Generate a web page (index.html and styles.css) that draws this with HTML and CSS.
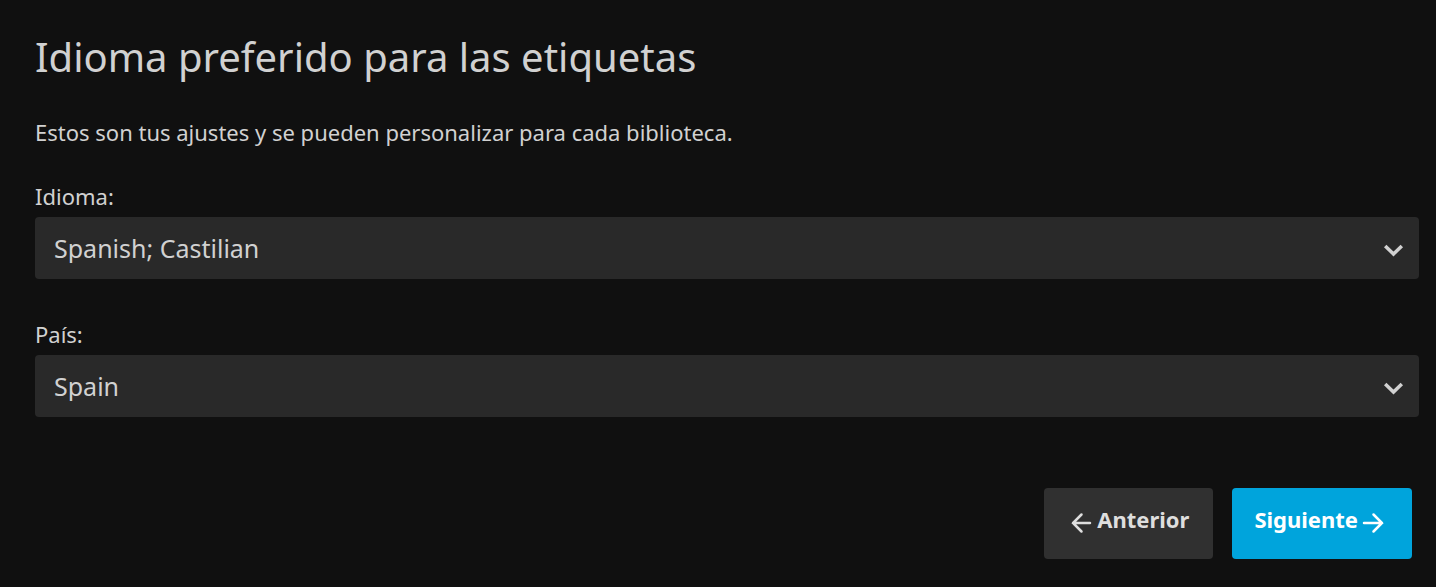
FILE: index.html
```html
<!DOCTYPE html>
<html lang="es">
<head>
<meta charset="utf-8">
<title>Idioma preferido</title>
<link rel="stylesheet" href="styles.css">
</head>
<body>
<form class="wizard">
  <h1 class="title">Idioma preferido para las etiquetas</h1>
  <p class="intro">Estos son tus ajustes y se pueden personalizar para cada biblioteca.</p>
  <div class="field">
    <label class="label" for="language">Idioma:</label>
    <div class="picker">
      <select class="select" id="language"><option>Spanish; Castilian</option></select>
      <svg class="chevron" viewBox="0 0 20 14" aria-hidden="true"><path d="M2.200 3 10.500 11 18.800 3"/></svg>
    </div>
  </div>
  <div class="field">
    <label class="label" for="country">País:</label>
    <div class="picker">
      <select class="select" id="country"><option>Spain</option></select>
      <svg class="chevron" viewBox="0 0 20 14" aria-hidden="true"><path d="M2.200 3 10.500 11 18.800 3"/></svg>
    </div>
  </div>
  <div class="actions">
    <button class="button" type="button"><svg class="arrow" viewBox="0 0 22 22" aria-hidden="true"><path d="M19 11H2M10.500 2.500 2 11l8.500 8.500"/></svg><span>Anterior</span></button>
    <button class="button primary" type="submit"><span>Siguiente</span><svg class="arrow" viewBox="0 0 22 22" aria-hidden="true"><path d="M2 11h18M11.500 2.500 20 11l-8.500 8.500"/></svg></button>
  </div>
</form>
</body>
</html>
```
FILE: styles.css
```css
* { box-sizing: border-box; }
body {
  margin: 0;
  background: #101010;
  color: #d1d1d1;
  font-family: "Noto Sans", sans-serif;
  font-size: 22px;
  line-height: 30px;
}
.wizard { padding: 29px 17px 28px 35px; }
.title { margin: 0; font-size: 40px; line-height: 56px; font-weight: 400; }
.intro { margin: 32px 0 34px; }
.field { margin-bottom: 40px; }
.label { display: block; margin-bottom: 6px; }
.picker { display: grid; align-items: center; }
.select, .chevron { grid-area: 1 / 1; }
.select {
  width: 100%;
  height: 62px;
  padding: 0 52px 0 19px;
  appearance: none;
  border: 0;
  border-radius: 4px;
  background: #292929;
  color: inherit;
  font: inherit;
  font-size: 25px;
}
.chevron {
  width: 20px;
  height: 14px;
  margin: 4px 16px 0 0;
  justify-self: end;
  overflow: visible;
  pointer-events: none;
}
.chevron, .arrow { fill: none; stroke: currentColor; }
.chevron { stroke-width: 3.5; }
.arrow { width: 22px; height: 22px; margin-top: 9px; stroke-width: 2.5; stroke-linecap: round; }
.actions { display: flex; justify-content: flex-end; gap: 19px; margin-top: 71px; padding-right: 7px; }
.button {
  display: flex;
  align-items: center;
  gap: 4px;
  height: 71px;
  padding: 0 24px 10px 27px;
  border: 0;
  border-radius: 4px;
  background: #303030;
  color: #dedede;
  font: inherit;
  font-weight: 700;
}
.primary { padding: 0 28px 10px 22px; background: #00a4dc; color: #fff; }
```
